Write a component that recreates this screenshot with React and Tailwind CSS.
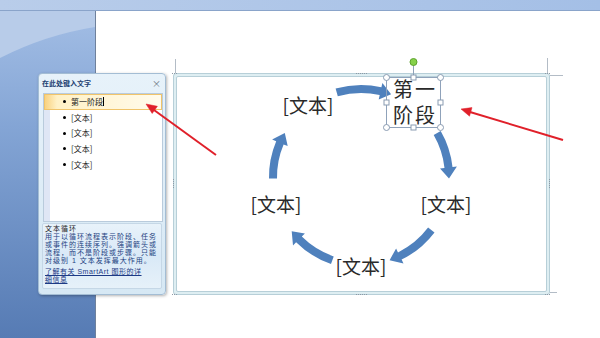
import React from 'react';

// circle that the cycle arrows and the text nodes sit on (coords inside the frame)
const CX = 184;
const CY = 100;
const R = 88;

const arcs = [
  [-16, 20],
  [60, 91],
  [127, 161],
  [199, 232],
  [269, 300],
];

const labels = [
  { x: 131, y: 27 },
  { x: 269, y: 126 },
  { x: 184, y: 188 },
  { x: 99, y: 126 },
];

function pt(deg, r) {
  const a = (deg * Math.PI) / 180;
  return [CX + r * Math.sin(a), CY - r * Math.cos(a)];
}

function arrowPath(a1, a2, w = 4, h = 8.5, len = 11) {
  const ah = a2 - ((len / R) * 180) / Math.PI;
  const f = (p) => p.map((n) => n.toFixed(1)).join(' ');
  return `M${f(pt(a1, R + w))} A${R + w} ${R + w} 0 0 1 ${f(pt(ah, R + w))} L${f(pt(ah, R + h))} L${f(pt(a2, R))} L${f(pt(ah, R - h))} L${f(pt(ah, R - w))} A${R - w} ${R - w} 0 0 0 ${f(pt(a1, R - w))}Z`;
}

function Backdrop() {
  return (
    <svg width="95" height="327" className="block">
      <defs>
        <linearGradient id="bgL" x1="0" y1="0" x2="0" y2="1">
          <stop offset="0" stopColor="#a3bee5" />
          <stop offset="0.35" stopColor="#84a5d5" />
          <stop offset="1" stopColor="#567bb4" />
        </linearGradient>
      </defs>
      <rect width="95" height="327" fill="url(#bgL)" />
      <path d="M0 0H95V16Q45 24 0 47Z" fill="#b8cce9" />
    </svg>
  );
}

function Diagram() {
  const cl = (x, y) => <circle key={`c${x}${y}`} cx={x} cy={y} r="3" fill="#fff" stroke="#8a9cb2" strokeWidth="1" />;
  const sq = (x, y) => <rect key={`s${x}${y}`} x={x - 2.5} y={y - 2.5} width="5" height="5" fill="#fff" stroke="#8a9cb2" strokeWidth="1" />;
  return (
    <>
      <svg width="371" height="216" className="absolute left-0 top-0 overflow-visible">
        {arcs.map(([a, b]) => (
          <path key={a} d={arrowPath(a, b)} fill="#4f81bd" />
        ))}
        <rect x="209.5" y="0.5" width="54" height="50" fill="none" stroke="#8fa2ba" strokeWidth="1" />
        <line x1="236.5" y1="-12" x2="236.5" y2="0" stroke="#8fa2ba" strokeWidth="1" />
        <circle cx="236.5" cy="-15" r="3.5" fill="#86d14a" stroke="#5ea32e" strokeWidth="1" />
        {cl(209.5, 0.5)}
        {cl(263.5, 0.5)}
        {cl(209.5, 50.5)}
        {cl(263.5, 50.5)}
        {sq(236.5, 0.5)}
        {sq(236.5, 50.5)}
        {sq(209.5, 25.5)}
        {sq(263.5, 25.5)}
      </svg>
      {labels.map((l) => (
        <div
          key={`${l.x}-${l.y}`}
          className="absolute -translate-x-1/2 -translate-y-1/2 whitespace-nowrap text-[19px] leading-none text-[#2a2a2a]"
          style={{ left: l.x, top: l.y }}
        >
          [文本]
        </div>
      ))}
      <div className="absolute left-[210px] top-[1px] w-[54px] h-[50px] flex flex-col items-center justify-center pl-[2px] font-['Liberation_Sans','Noto_Sans_CJK_SC',sans-serif] text-[20px] leading-[26px] tracking-[2px] text-[#2a2a2a]">
        <span>第一</span>
        <span>阶段</span>
      </div>
    </>
  );
}

function TextPane() {
  const rows = ['[文本]', '[文本]', '[文本]', '[文本]'];
  return (
    <div className="absolute left-[38px] top-[73px] w-[128px] h-[222px] rounded-[4px] border border-[#a3bdd4] bg-linear-to-b from-[#e7f2fa] to-[#d6e8f4] shadow-[1px_1px_3px_rgba(0,0,0,0.3)] flex flex-col">
      <div className="h-[19px] shrink-0 flex items-center justify-between pl-[3px] pr-[4px]">
        <span className="text-[7px] font-bold text-[#1d3f72] leading-none">在此处键入文字</span>
        <span className="text-[9px] text-[#6a7480] leading-none">×</span>
      </div>
      <div className="ml-[4px] w-[120px] h-[129px] shrink-0 border border-[#b9cbdc] bg-[linear-gradient(to_right,#dfe6f5_6px,#fff_6px)] text-[8px] text-[#222]">
        <div className="h-[15.7px] flex items-center pl-[18px] gap-[5px] border border-[#f0c46a] bg-[linear-gradient(to_right,#f9d27f,#fff1c6_12px,#fffbec)]">
          <span className="w-[3px] h-[3px] rounded-full bg-black" />
          <span className="leading-none">第一阶段</span>
          <span className="-ml-[5px] w-px h-[9px] bg-black" />
        </div>
        {rows.map((r, i) => (
          <div key={i} className="h-[15.7px] flex items-center pl-[19px] gap-[5px]">
            <span className="w-[3px] h-[3px] rounded-full bg-black" />
            <span className="leading-none">{r}</span>
          </div>
        ))}
      </div>
      <div className="mx-[3px] mt-px mb-[5px] flex-1 rounded-[2px] border border-[#c5d7e6] bg-linear-to-b from-[#e8f2fa] via-[#d9e9f7] to-[#e6f1f9] px-[2px] pt-px font-['Liberation_Sans','Noto_Sans_CJK_SC',sans-serif] text-[7px] leading-[8px] tracking-[1px] whitespace-nowrap">
        <div className="text-[#222]">文本循环</div>
        <div className="text-[#24427f]">
          <div>用于以循环流程表示阶段、任务</div>
          <div>或事件的连续序列。强调箭头或</div>
          <div>流程，而不是阶段或步骤。只能</div>
          <div>对级别 1 文本发挥最大作用。</div>
        </div>
        <div className="mt-[3px] text-[#1d3a85] underline tracking-[0.5px]">
          <div>了解有关 SmartArt 图形的详</div>
          <div>细信息</div>
        </div>
      </div>
    </div>
  );
}

function Overlay() {
  return (
    <svg width="600" height="338" className="absolute left-0 top-0 pointer-events-none">
      {/* guides round the SmartArt frame */}
      <g stroke="#b3bcc6" strokeWidth="1">
        <line x1="175.5" y1="59" x2="175.5" y2="73" />
        <line x1="547.5" y1="58" x2="547.5" y2="73" />
        <line x1="550" y1="75.5" x2="563" y2="75.5" />
        <line x1="550" y1="292.5" x2="557" y2="292.5" />
      </g>
      <g stroke="#8d9aa6" strokeWidth="1" strokeDasharray="1 1">
        <line x1="356" y1="73.5" x2="367" y2="73.5" />
        <line x1="356" y1="294.5" x2="367" y2="294.5" />
        <line x1="173.5" y1="179" x2="173.5" y2="188" />
        <line x1="549.5" y1="179" x2="549.5" y2="188" />
        <line x1="172" y1="73.5" x2="177" y2="73.5" />
        <line x1="545" y1="73.5" x2="551" y2="73.5" />
        <line x1="172" y1="294.5" x2="177" y2="294.5" />
        <line x1="545" y1="294.5" x2="551" y2="294.5" />
      </g>
      {/* red pointers */}
      <g stroke="#e0202a" strokeWidth="2" fill="#e0202a">
        <line x1="216" y1="155" x2="154" y2="110" />
        <polygon points="146,104 157.4,106.3 152.2,113.5" strokeWidth="0.5" />
        <line x1="563" y1="140" x2="470" y2="112" />
        <polygon points="461,109 472,107.6 469.5,116.2" strokeWidth="0.5" />
      </g>
    </svg>
  );
}

export default function App() {
  return (
    <div className="relative w-[600px] h-[338px] overflow-hidden flex flex-col font-['Noto_Sans_CJK_SC','Noto_Sans',sans-serif]">
      <div className="h-[11px] shrink-0 bg-linear-to-r from-[#b9cdea] to-[#a4bfe6] border-b border-[#8aa4ca]" />
      <div className="flex flex-1 min-h-0">
        <div className="w-[95px] shrink-0">
          <Backdrop />
        </div>
        <div className="flex-1 bg-white border-l border-[#6f819c]">
          <div className="ml-[77px] mt-[62px] w-[377px] h-[222px] rounded-[3px] border border-[#b7cfd8] bg-[#deeef2] p-[2px]">
            <div className="relative h-full rounded-[2px] border border-[#b7cfd8] bg-white">
              <Diagram />
            </div>
          </div>
        </div>
      </div>
      <TextPane />
      <Overlay />
    </div>
  );
}
